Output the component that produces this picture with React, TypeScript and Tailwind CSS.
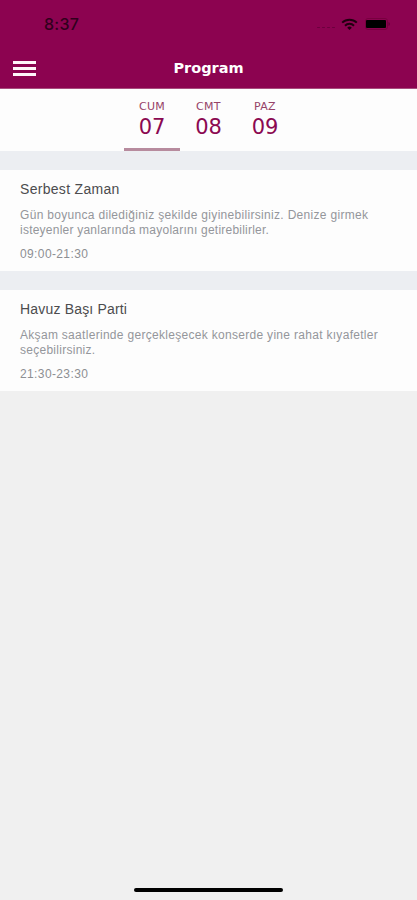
type Day = { name: string; date: string };
type Session = { title: string; titleTracking: string; lines: string[]; time: string; tracking: string[] };

const days: Day[] = [
  { name: "CUM", date: "07" },
  { name: "CMT", date: "08" },
  { name: "PAZ", date: "09" },
];

const sessions: Session[] = [
  {
    title: "Serbest Zaman",
    titleTracking: "tracking-[0.3px]",
    lines: ["Gün boyunca dilediğiniz şekilde giyinebilirsiniz. Denize girmek", "isteyenler yanlarında mayolarını getirebilirler."],
    time: "09:00-21:30",
    tracking: ["tracking-[0.31px]", "tracking-[0.23px]"],
  },
  {
    title: "Havuz Başı Parti",
    titleTracking: "tracking-[0.18px]",
    lines: ["Akşam saatlerinde gerçekleşecek konserde yine rahat kıyafetler", "seçebilirsiniz."],
    time: "21:30-23:30",
    tracking: ["tracking-[0.3px]", "tracking-[0.27px]"],
  },
];

function StatusBar() {
  return (
    <div className="flex h-12 items-center justify-between pl-11 pr-[26px] text-[#30001c]">
      <span className="font-['Inter'] text-[16px] font-medium leading-none tracking-[0.3px]">8:37</span>
      <div className="flex items-center text-black">
        <div className="mr-[6px] mt-[7px] flex gap-[2px]">
          {[0, 1, 2, 3].map((i) => (
            <span key={i} className="h-[1.5px] w-[3px] rounded-full bg-[#6c003d]" />
          ))}
        </div>
        <svg width="17" height="13" viewBox="0 0 17 13" fill="none" stroke="#20000f" strokeWidth="2">
          <path d="M1.2 4.6a10.5 10.5 0 0 1 14.6 0M4 7.7a6.4 6.4 0 0 1 9 0" />
          <path d="M8.5 12 6.2 9.7a3.3 3.3 0 0 1 4.6 0Z" fill="#20000f" stroke="none" />
        </svg>
        <svg className="ml-[7px]" width="26" height="12" viewBox="0 0 26 12">
          <rect x="0.5" y="0.5" width="22" height="11" rx="2.5" fill="none" stroke="#78003f" />
          <rect x="1" y="2" width="20" height="8" rx="1" fill="#000" />
          <path d="M23.5 4v4q1.4-.7 1.4-2T23.5 4" fill="#62003a" />
        </svg>
      </div>
    </div>
  );
}

function DayTab({ day, active }: { day: Day; active: boolean }) {
  return (
    <button
      className={`flex h-[62px] w-[56.5px] flex-col items-center border-b-[3px] pt-[10px] text-[#8b0951] ${
        active ? "border-[#b78b9e]" : "border-transparent"
      }`}
    >
      <span className="text-[11px] leading-[15px] tracking-[0.3px] text-[#964368]">{day.name}</span>
      <span className="text-[21px] leading-[26px]">{day.date}</span>
    </button>
  );
}

function SessionCard({ session }: { session: Session }) {
  return (
    <article className="h-[101px] bg-[#fdfdfd] px-5 pt-[10px] font-['Liberation_Sans',sans-serif]">
      <h2 className={`text-[14px] leading-[19px] text-[#4c4c4e] ${session.titleTracking}`}>{session.title}</h2>
      <p className="mt-[9px] text-[12px] leading-[14.5px] text-[#94969b]">
        {session.lines.map((line, i) => (
          <span key={line} className={`block whitespace-nowrap ${session.tracking[i]}`}>{line}</span>
        ))}
      </p>
      <time className="mt-[10px] block text-[12px] leading-[14px] tracking-[0.38px] text-[#8d8f93]">{session.time}</time>
    </article>
  );
}

export default function App() {
  return (
    <main className="flex h-[900px] w-[417px] flex-col overflow-hidden bg-[#f0f0f0] font-['DejaVu_Sans',sans-serif]">
      <header className="h-[89px] border-b border-[#a84c7d] bg-[#8c0350]">
        <StatusBar />
        <div className="grid h-10 grid-cols-[1fr_auto_1fr] items-center px-[13px]">
          <button aria-label="Menu" className="flex w-[23px] flex-col gap-[3px]">
            <span className="h-[3px] bg-[#fff5fa]" />
            <span className="h-[3px] bg-[#fff5fa]" />
            <span className="h-[3px] bg-[#fff5fa]" />
          </button>
          <h1 className="text-[14.5px] font-bold leading-5 text-white">Program</h1>
        </div>
      </header>
      <nav className="flex h-[62px] justify-center bg-[#fdfdfd]">
        {days.map((day, i) => (
          <DayTab key={day.date} day={day} active={i === 0} />
        ))}
      </nav>
      <section className="flex flex-col gap-[19px] bg-[#eceef2] pt-[19px]">
        {sessions.map((session) => (
          <SessionCard key={session.title} session={session} />
        ))}
      </section>
      <div className="mx-auto mb-[8px] mt-auto h-1 w-[149px] rounded-full bg-black" />
    </main>
  );
}
